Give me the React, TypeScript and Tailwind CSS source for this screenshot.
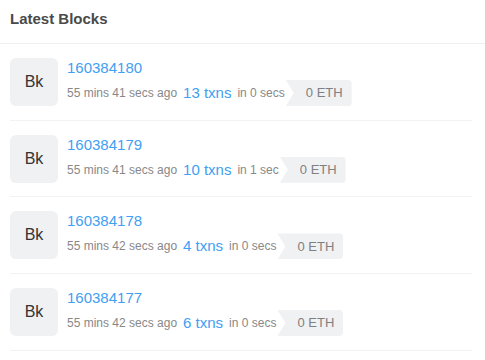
import React from 'react';

const blocks = [
  { num: '160384180', ago: '55 mins 41 secs ago', txns: '13 txns', took: 'in 0 secs' },
  { num: '160384179', ago: '55 mins 41 secs ago', txns: '10 txns', took: 'in 1 sec' },
  { num: '160384178', ago: '55 mins 42 secs ago', txns: '4 txns', took: 'in 0 secs' },
  { num: '160384177', ago: '55 mins 42 secs ago', txns: '6 txns', took: 'in 0 secs' },
];

const BlockRow = ({ b }: { b: (typeof blocks)[number] }) => (
  <div className="flex h-[76.7px] items-start border-b border-[#f2f2f2] pt-[14px]">
    <div className="flex h-[48px] w-[48px] shrink-0 items-center justify-center rounded-[6px] bg-[#f0f1f3] text-[16px] text-[#333]">
      Bk
    </div>
    <div className="ml-[9px] flex flex-col">
      <a className="h-[20px] text-[15px] leading-[20px] text-[#40a0f2]">{b.num}</a>
      <div className="mt-[2px] flex h-[26px] items-center gap-[6px] whitespace-nowrap">
        <span className="text-[12px] text-[#888]">{b.ago}</span>
        <a className="text-[15px] leading-[18px] text-[#40a0f2]">{b.txns}</a>
        <span className="text-[12px] text-[#888]">{b.took}</span>
        <span
          className="-ml-[5px] flex h-[26px] items-center rounded-r-[4px] bg-[#f0f1f3] pl-[20px] pr-[9px] text-[13px] text-[#808080]"
          style={{ clipPath: 'polygon(0 0, 100% 0, 100% 100%, 0 100%, 8px 50%)' }}
        >
          0 ETH
        </span>
      </div>
    </div>
  </div>
);

export default function App() {
  return (
    <div className="h-[360px] w-[485px] overflow-hidden bg-white font-['Liberation_Sans',Arial,sans-serif]">
      <div className="h-[44px] border-b border-[#efefef] pl-[10px] pt-[9px]">
        <h2 className="text-[15px] font-bold leading-[20px] text-[#4a4a4a]">Latest Blocks</h2>
      </div>
      <div className="ml-[10px] mr-[13px]">
        {blocks.map((b) => (
          <BlockRow key={b.num} b={b} />
        ))}
      </div>
    </div>
  );
}
